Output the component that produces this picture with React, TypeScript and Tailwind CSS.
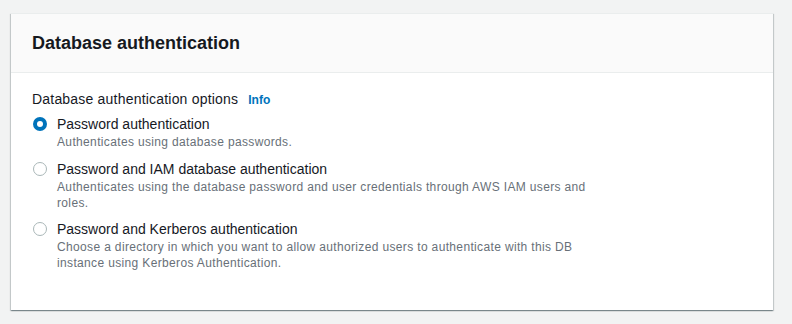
const options = [
  {
    label: 'Password authentication',
    desc: ['Authenticates using database passwords.'],
    checked: true,
  },
  {
    label: 'Password and IAM database authentication',
    desc: [
      'Authenticates using the database password and user credentials through AWS IAM users and',
      'roles.',
    ],
    checked: false,
  },
  {
    label: 'Password and Kerberos authentication',
    desc: [
      'Choose a directory in which you want to allow authorized users to authenticate with this DB',
      'instance using Kerberos Authentication.',
    ],
    checked: false,
  },
]

function Radio({ checked }: { checked: boolean }) {
  if (checked) {
    return (
      <span className="mt-[3px] flex h-[14px] w-[14px] shrink-0 items-center justify-center rounded-full bg-[#0073bb]">
        <span className="h-[6px] w-[6px] rounded-full bg-white" />
      </span>
    )
  }
  return (
    <span className="mt-[3px] h-[14px] w-[14px] shrink-0 rounded-full border border-[#aab7b8] bg-white" />
  )
}

export default function App() {
  return (
    <div
      className="h-[324px] w-[792px] bg-[#f2f3f3] pt-[13px] pl-[11px]"
      style={{ fontFamily: '"Liberation Sans", Arial, sans-serif' }}
    >
      <div className="w-[762px] border-t border-[#eaeded] bg-white shadow-[0_1px_1px_0_rgba(0,28,36,0.3),1px_1px_1px_0_rgba(0,28,36,0.15),-1px_1px_1px_0_rgba(0,28,36,0.15)]">
        <div className="border-b border-[#eaeded] bg-[#fafafa] px-[21px] py-[18px]">
          <h2 className="text-[18px] leading-[22px] font-bold text-[#16191f]">
            Database authentication
          </h2>
        </div>
        <div className="px-[21px] pt-[16px] pb-[39px] text-[#16191f]">
          <div className="flex items-baseline gap-[10px] text-[14px] leading-[20px]">
            <span className="tracking-[0.2px]">Database authentication options</span>
            <span className="text-[12px] font-bold text-[#0073bb]">Info</span>
          </div>
          <div className="mt-[4px] flex flex-col gap-[8px]">
            {options.map((o, i) => (
              <div key={o.label} className={`flex gap-[10px] pl-[1px] ${i === 1 ? 'pt-[1px]' : ''}`}>
                <Radio checked={o.checked} />
                <div>
                  <div className="text-[14px] leading-[20px]">{o.label}</div>
                  <div className="text-[12px] leading-[16px] tracking-[0.35px] text-[#687078]">
                    {o.desc.map((d) => (
                      <div key={d}>{d}</div>
                    ))}
                  </div>
                </div>
              </div>
            ))}
          </div>
        </div>
      </div>
    </div>
  )
}
